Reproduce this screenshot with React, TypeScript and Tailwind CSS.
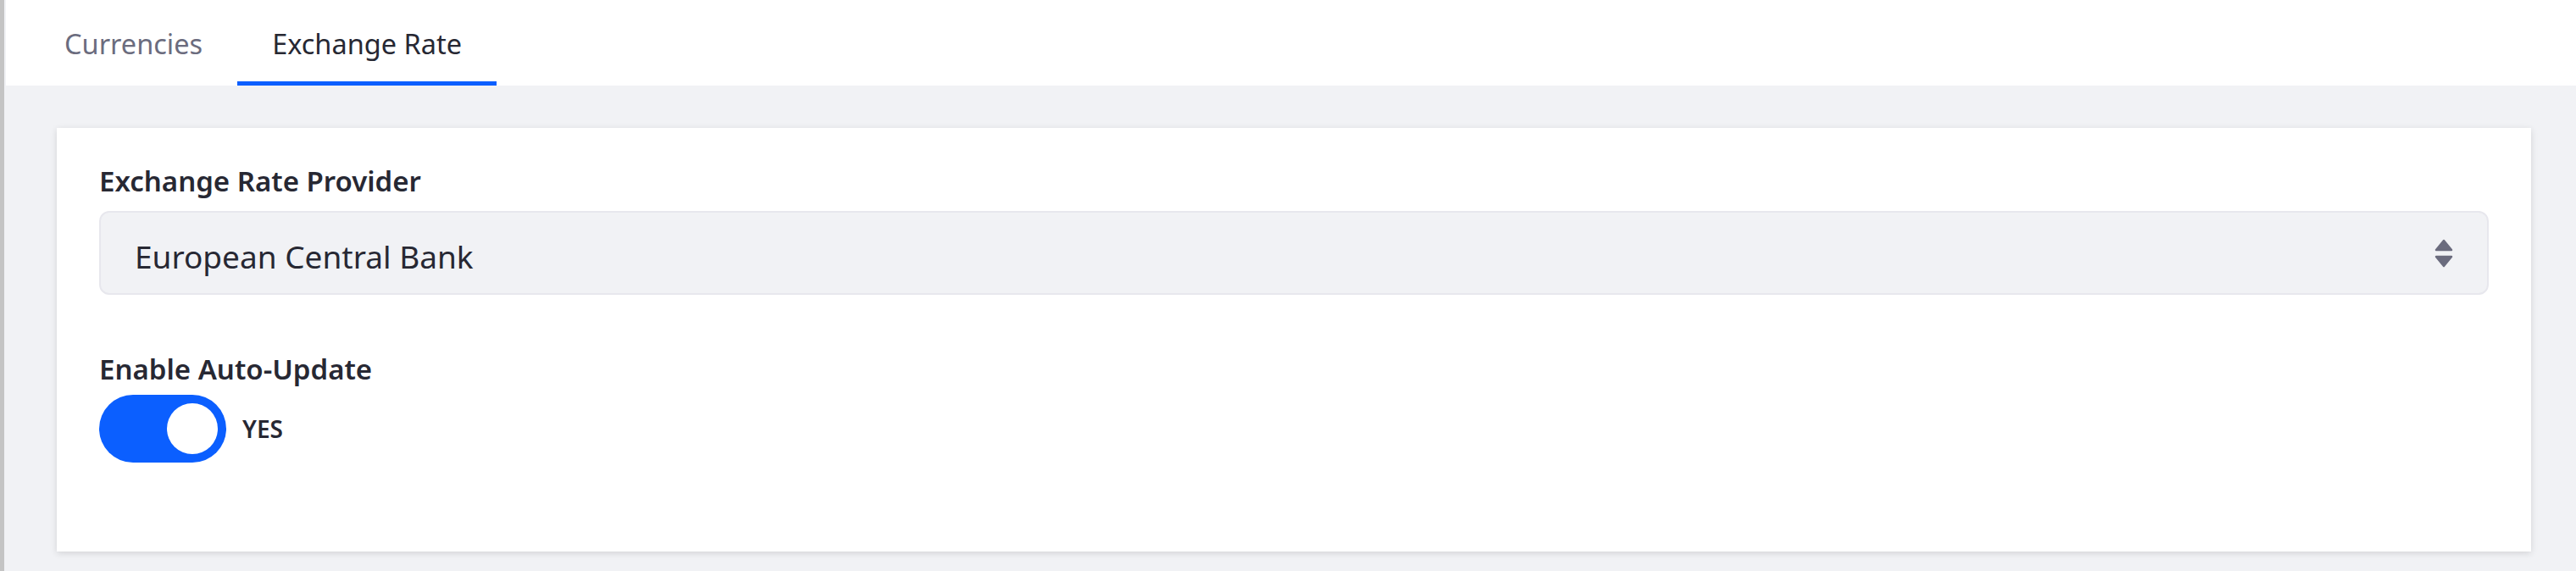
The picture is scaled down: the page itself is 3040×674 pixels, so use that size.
import React from 'react';

const tabs = [
  { id: 'currencies', label: 'Currencies' },
  { id: 'exchange-rate', label: 'Exchange Rate' },
];

const SelectArrows: React.FC = () => (
  <svg width="22" height="34" viewBox="0 0 22 34" className="shrink-0 text-[#6b6c7e]">
    <polygon points="2,13 11,2 20,13" fill="currentColor" stroke="currentColor" strokeWidth="2.5" strokeLinejoin="round" />
    <polygon points="2,21 20,21 11,32" fill="currentColor" stroke="currentColor" strokeWidth="2.5" strokeLinejoin="round" />
  </svg>
);

export default function App() {
  const [active, setActive] = React.useState('exchange-rate');
  const [autoUpdate, setAutoUpdate] = React.useState(true);

  return (
    <div className="flex w-[3040px] h-[674px] overflow-hidden bg-[#f1f2f5] font-['Noto_Sans',sans-serif] text-[#272833]">
      <div className="w-[5px] shrink-0 bg-[#c4c4c4]" />
      <div className="flex-1 flex flex-col pl-[2px]">
        {/* tabs */}
        <nav className="h-[101px] bg-white flex pl-[28px]">
          {tabs.map((tab) => {
            const isActive = tab.id === active;
            return (
              <button
                key={tab.id}
                onClick={() => setActive(tab.id)}
                className={`h-[101px] px-[41px] pt-[32px] box-border border-b-[5px] text-[32.5px] leading-[40px] flex items-start ${
                  isActive ? 'border-[#0b5fff] text-[#272833]' : 'border-transparent text-[#6b6c7e]'
                }`}
              >
                {tab.label}
              </button>
            );
          })}
        </nav>

        <div className="pt-[50px] pl-[60px] pr-[53px]">
          <div className="bg-white shadow-[0_2px_8px_rgba(0,0,0,0.13)] pt-[43px] px-[50px] pb-[105px]">
            <label className="block text-[33px] leading-[40px] font-semibold">Exchange Rate Provider</label>
            <div className="mt-[15px] h-[99px] border-2 border-[#e7e7ed] bg-[#f1f2f5] rounded-[12px] flex items-center justify-between pl-[40px] pr-[40px]">
              <span className="text-[37px] leading-[52px] mt-[8px]">European Central Bank</span>
              <SelectArrows />
            </div>

            <label className="block mt-[68px] text-[33px] leading-[40px] font-semibold">Enable Auto-Update</label>
            <div className="mt-[10px] flex items-center gap-[19px]">
              <button
                onClick={() => setAutoUpdate(!autoUpdate)}
                className={`w-[150px] h-[80px] rounded-full flex items-center px-[10px] ${
                  autoUpdate ? 'bg-[#0b5fff] justify-end' : 'bg-[#cdced9] justify-start'
                }`}
              >
                <span className="block w-[60px] h-[60px] rounded-full bg-white" />
              </button>
              <span className="text-[28px] font-semibold">{autoUpdate ? 'YES' : 'NO'}</span>
            </div>
          </div>
        </div>
      </div>
    </div>
  );
}
